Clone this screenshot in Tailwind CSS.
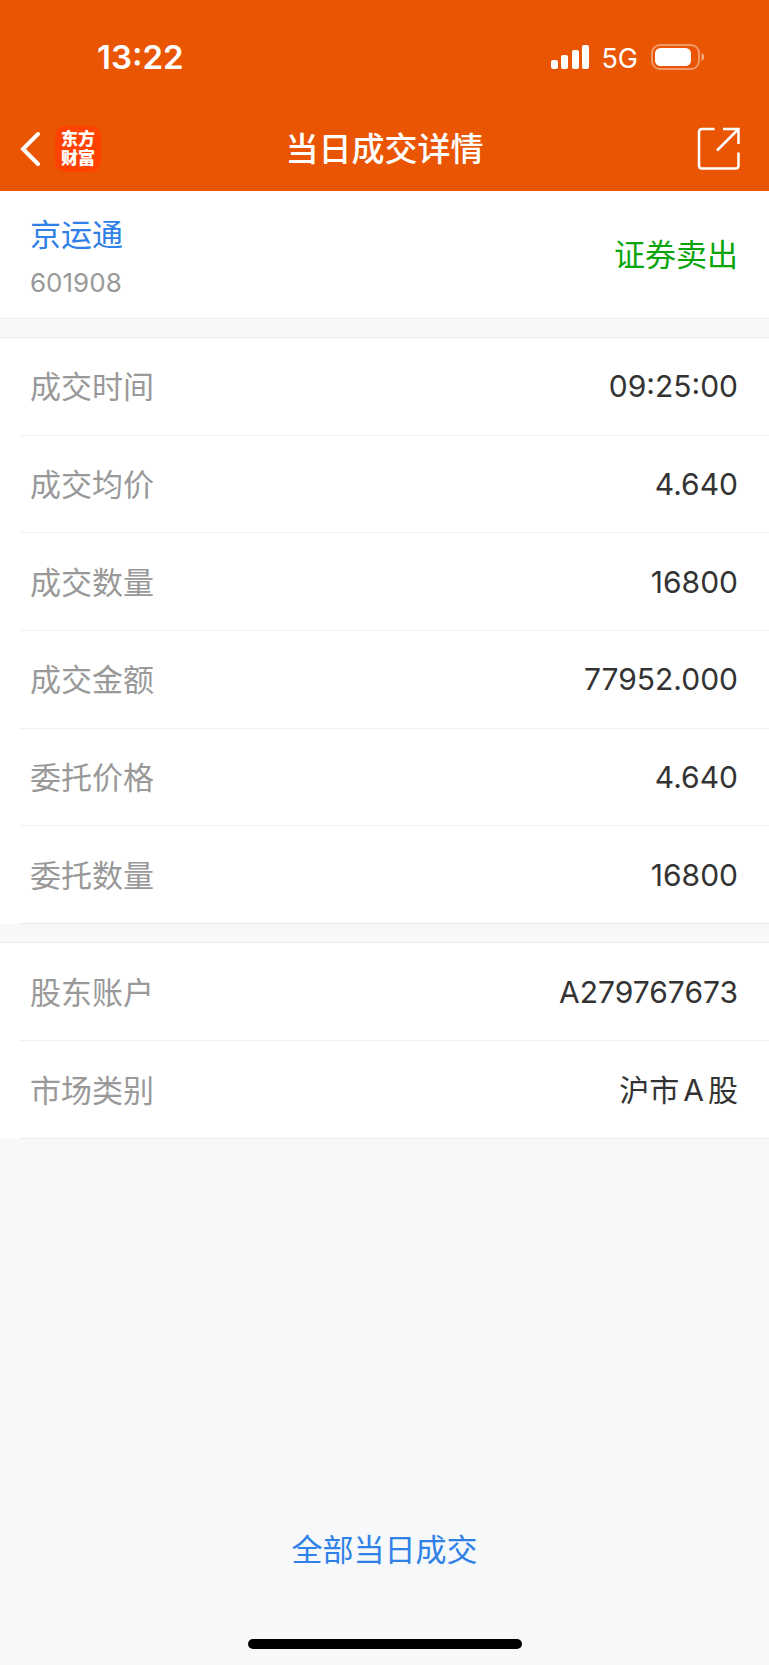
<!DOCTYPE html>
<html lang="zh-CN">
<head>
<meta charset="utf-8">
<meta name="viewport" content="width=device-width, initial-scale=1">
<title>当日成交详情</title>
<script src="https://cdn.jsdelivr.net/npm/@tailwindcss/browser@4"></script>
</head>
<body class="flex min-h-screen flex-col bg-[#f6f8fa] font-['Inter','Noto_Sans_CJK_SC',sans-serif] text-[31px] leading-10 text-[#333]">
  <header class="bg-[#ea5504] text-white">
    <!-- Status bar -->
    <div class="flex h-[106px] items-center justify-between pt-2 pr-[64px] pl-[97px]">
      <span class="text-[33px] font-semibold">13:22</span>
      <div class="flex items-center">
        <svg class="h-6 w-[38px]" viewBox="0 0 38 24" fill="currentColor" aria-label="信号">
          <rect x="0" y="15" width="7" height="9" rx="2"/>
          <rect x="10" y="10" width="7" height="14" rx="2"/>
          <rect x="21" y="5" width="7" height="19" rx="2"/>
          <rect x="31" y="0" width="7" height="24" rx="2"/>
        </svg>
        <span class="ml-3 pt-1 text-[27px]">5G</span>
        <svg class="ml-[13px] h-[26px] w-[54px]" viewBox="0 0 54 26" aria-label="电池">
          <rect x="1" y="1" width="47" height="24" rx="8" fill="none" stroke="#fff" stroke-opacity=".4" stroke-width="2"/>
          <rect x="4" y="4" width="36" height="18" rx="5.500" fill="#fff"/>
          <path d="M50.500 9c2 .7 2.700 2.300 2.700 4s-.7 3.300-2.700 4z" fill="#fff" fill-opacity=".5"/>
        </svg>
      </div>
    </div>
    <!-- Title bar -->
    <div class="grid h-[85px] grid-cols-[1fr_auto_1fr] items-center px-5">
      <div class="flex items-center gap-[14px]">
        <button type="button" aria-label="返回">
          <svg class="h-[36px] w-[21px]" viewBox="0 0 21 36" fill="none" stroke="currentColor" stroke-width="4" stroke-linecap="round" stroke-linejoin="miter"><path d="M18 3 3 18 18 33"/></svg>
        </button>
        <div class="flex size-[46px] items-center justify-center rounded-[10px] bg-[#ff4200] pb-1 text-center font-['Noto_Sans_CJK_SC',sans-serif] text-[17px] leading-[19px] font-black"><p>东方<br>财富</p></div>
      </div>
      <h1 class="text-[33px] font-medium">当日成交详情</h1>
      <button type="button" class="mr-[9px] justify-self-end" aria-label="分享">
        <svg class="h-[43px] w-[43px]" viewBox="0 0 43 43" fill="none" stroke="currentColor" stroke-width="2.500"><path d="M17.500 2H5Q2 2 2 5v33.500q0 3 3 3h33.500q3 0 3-3V25.500M26 2h15.500v15M41 2.500 20 23.500"/></svg>
      </button>
    </div>
  </header>

  <main class="flex flex-1 flex-col">
    <section class="flex h-[128px] items-center justify-between border-b border-[#eceef0] bg-white pr-[31px] pl-[30px]">
      <div class="pt-2">
        <a href="#" class="block text-[#2f80e7]">京运通</a>
        <p class="mt-2 text-[26px] text-[#999]">601908</p>
      </div>
      <span class="text-[#0aa50a]">证券卖出</span>
    </section>

    <dl class="mt-[18px] grid min-h-[587px] auto-rows-fr border-t border-[#e8ebee] bg-white">
      <div class="flex pl-5"><div class="flex flex-1 items-center justify-between border-b border-[#f0f1f2] pt-[2px] pr-[31px] pl-[10px]"><dt class="text-[#999]">成交时间</dt><dd class="pb-[2px] text-[30px]">09:25:00</dd></div></div>
      <div class="flex pl-5"><div class="flex flex-1 items-center justify-between border-b border-[#f0f1f2] pt-[2px] pr-[31px] pl-[10px]"><dt class="text-[#999]">成交均价</dt><dd class="pb-[2px] text-[30px]">4.640</dd></div></div>
      <div class="flex pl-5"><div class="flex flex-1 items-center justify-between border-b border-[#f0f1f2] pt-[2px] pr-[31px] pl-[10px]"><dt class="text-[#999]">成交数量</dt><dd class="pb-[2px] text-[30px]">16800</dd></div></div>
      <div class="flex pl-5"><div class="flex flex-1 items-center justify-between border-b border-[#f0f1f2] pt-[2px] pr-[31px] pl-[10px]"><dt class="text-[#999]">成交金额</dt><dd class="pb-[2px] text-[30px]">77952.000</dd></div></div>
      <div class="flex pl-5"><div class="flex flex-1 items-center justify-between border-b border-[#f0f1f2] pt-[2px] pr-[31px] pl-[10px]"><dt class="text-[#999]">委托价格</dt><dd class="pb-[2px] text-[30px]">4.640</dd></div></div>
      <div class="flex pl-5"><div class="flex flex-1 items-center justify-between border-b border-[#e8ebee] pt-[2px] pr-[31px] pl-[10px]"><dt class="text-[#999]">委托数量</dt><dd class="pb-[2px] text-[30px]">16800</dd></div></div>
    </dl>

    <dl class="mt-[18px] grid min-h-[197px] auto-rows-fr border-t border-[#e8ebee] bg-white">
      <div class="flex pl-5"><div class="flex flex-1 items-center justify-between border-b border-[#f0f1f2] pt-[2px] pr-[31px] pl-[10px]"><dt class="text-[#999]">股东账户</dt><dd class="pb-[2px] text-[30px]">A279767673</dd></div></div>
      <div class="flex pl-5"><div class="flex flex-1 items-center justify-between border-b border-[#e8ebee] pt-[2px] pr-[31px] pl-[10px]"><dt class="text-[#999]">市场类别</dt><dd class="flex gap-1 pb-[2px] text-[30px]"><span>沪市</span><span>A</span><span>股</span></dd></div></div>
    </dl>

    <a href="#" class="mt-auto self-center text-[#2f80e7]">全部当日成交</a>
  </main>

  <footer class="flex justify-center pt-[69px] pb-4">
    <div class="h-[10px] w-[274px] rounded-full bg-black"></div>
  </footer>
</body>
</html>
